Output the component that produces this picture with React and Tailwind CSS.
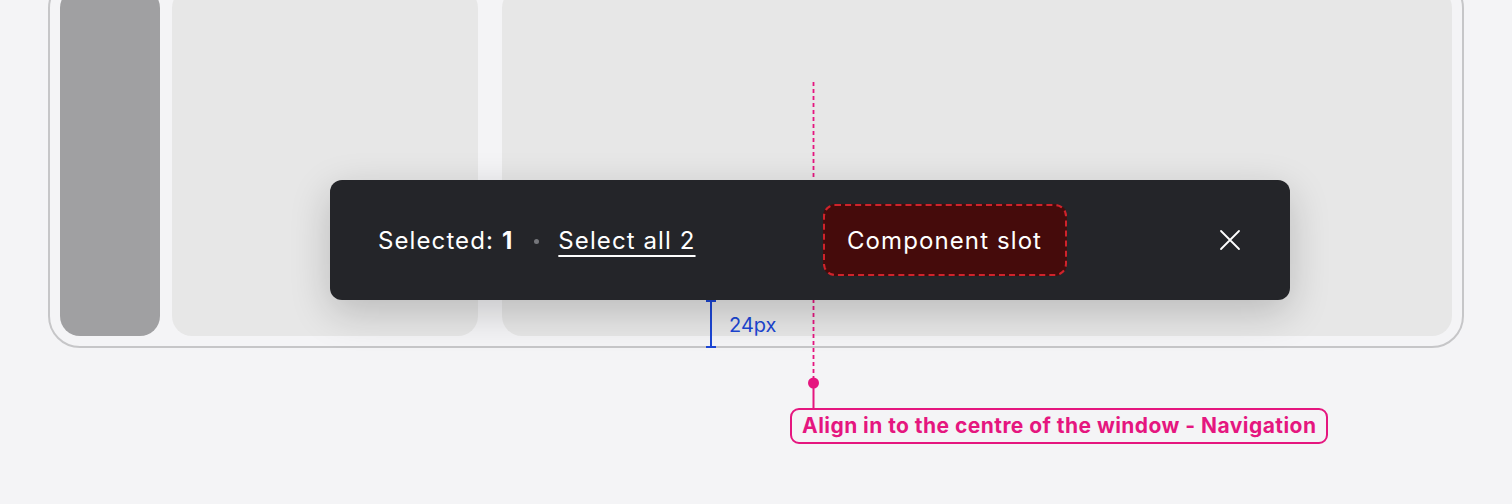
import React from 'react'

// ── Selection bar spec sheet ──────────────────────────────────
const PINK = '#e5167f'
const BLUE = '#1c46d4'

function CloseIcon() {
  return (
    <svg width="22" height="22" viewBox="0 0 22 22" fill="none" stroke="white" strokeWidth="1.8" strokeLinecap="round">
      <path d="M2 2L20 20M20 2L2 20" />
    </svg>
  )
}

function SelectionBar() {
  return (
    <div className="absolute left-[330px] top-[180px] w-[960px] h-[120px] rounded-[12px] bg-[#242529] shadow-[0_12px_40px_rgba(0,0,0,0.2)] flex items-center pl-[48px] pr-[49px] text-white text-[24px] tracking-[1.1px]">
      <div className="flex items-center pt-[2px]">
        <span>Selected: <span className="font-bold">1</span></span>
        <span className="w-[5px] h-[5px] rounded-full bg-[#75767b] ml-[21px] mr-[19px]" />
        <span className="underline underline-offset-[6px] decoration-[1.5px]">Select all 2</span>
      </div>
      <div className="ml-[127px] w-[244px] h-[72px] pt-[2px] flex items-center justify-center rounded-[12px] border-2 border-dashed border-[#d0232b] bg-[#450b0b]">
        Component slot
      </div>
      <div className="ml-auto">
        <CloseIcon />
      </div>
    </div>
  )
}

function Annotations() {
  return (
    <>
      {/* centre guide */}
      <svg className="absolute left-[808px] top-[82px]" width="12" height="330">
        <line x1="5.5" y1="0" x2="5.5" y2="301" stroke={PINK} strokeWidth="1.8" strokeDasharray="4 3" />
        <circle cx="5.5" cy="301" r="5.5" fill={PINK} />
        <line x1="5.5" y1="301" x2="5.5" y2="328" stroke={PINK} strokeWidth="2" />
      </svg>
      <div
        className="absolute left-[790px] top-[408px] h-[36px] px-[10px] flex items-center rounded-[9px] border-2 text-[21px] font-bold tracking-[0.45px]"
        style={{ borderColor: PINK, color: PINK }}
      >
        Align in to the centre of the window - Navigation
      </div>
    </>
  )
}

function Measure() {
  return (
    <>
      <svg className="absolute left-[705px] top-[300px]" width="12" height="48">
        <line x1="6" y1="1" x2="6" y2="47" stroke={BLUE} strokeWidth="2" />
        <line x1="1" y1="1" x2="11" y2="1" stroke={BLUE} strokeWidth="2" />
        <line x1="1" y1="47" x2="11" y2="47" stroke={BLUE} strokeWidth="2" />
      </svg>
      <span className="absolute left-[729px] top-[310px] text-[20px]" style={{ color: BLUE }}>24px</span>
    </>
  )
}

export default function App() {
  return (
    <div className="relative w-full h-[504px] overflow-hidden bg-[#f4f4f6]" style={{ fontFamily: 'Inter, sans-serif' }}>
      {/* window frame */}
      <div className="mx-[48px] mt-[-24px] h-[372px] rounded-[32px] border-2 border-[#c6c6c8] p-[10px] flex">
        <div className="w-[100px] rounded-[20px] bg-[#a0a0a2]" />
        <div className="ml-[12px] w-[306px] rounded-[20px] bg-[#e7e7e7]" />
        <div className="ml-[24px] flex-1 rounded-[20px] bg-[#e7e7e7]" />
      </div>

      <Annotations />
      <Measure />
      <SelectionBar />
    </div>
  )
}
